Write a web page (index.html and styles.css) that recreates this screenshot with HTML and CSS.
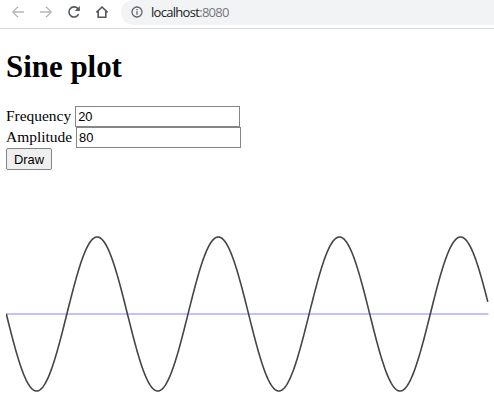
FILE: index.html
```html
<!DOCTYPE html>
<html lang="en">
<head>
<meta charset="utf-8">
<title>Sine plot</title>
<link rel="stylesheet" href="styles.css">
</head>
<body>
<header class="toolbar">
  <svg class="nav muted" viewBox="0 0 16 16"><path d="M14 8H3M8 2.8 2.8 8 8 13.2"/></svg>
  <svg class="nav muted" viewBox="0 0 16 16"><path d="M2 8h11M8 2.8 13.2 8 8 13.2"/></svg>
  <svg class="nav" viewBox="0 0 16 16"><path d="M12.6 10.2A5.1 5.1 0 1 1 11.7 4.4L13 5.8"/><path class="solid" d="M13.8 2v5H8.8z"/></svg>
  <svg class="nav home" viewBox="0 0 16 16"><path d="M2.4 8.3 8 3l5.6 5.3M4.2 7.2v6.1h7.6V7.2"/></svg>
  <div class="address">
    <svg class="info" viewBox="0 0 12 12"><circle cx="6" cy="6" r="5"/><path d="M6 5.2v3.6M6 3v1.3"/></svg>
    <span class="host">localhost<span class="port">:8080</span></span>
  </div>
</header>
<main class="page">
  <h1>Sine plot</h1>
  <form class="controls">
    <label class="row"><span>Frequency</span><input type="text" value="20"></label>
    <label class="row"><span>Amplitude</span><input type="text" value="80"></label>
    <button type="button">Draw</button>
  </form>
  <svg class="plot" viewBox="0 0 483 170">
    <path class="axis" d="M0 85H482.5"/>
    <path class="wave" id="wave"/>
  </svg>
</main>
<script src="plot.js"></script>
</body>
</html>
```
FILE: styles.css
```css
body {
  margin: 0;
  background: #fff;
  color: #000;
  font-family: "Liberation Serif", serif;
  overflow: hidden;
}
.toolbar {
  display: flex;
  height: 28px;
  box-sizing: content-box;
  border-bottom: 1px solid #d9dadc;
  padding-left: 10px;
}
.nav {
  width: 16px;
  height: 16px;
  margin: 4px 12px 0 0;
  flex: none;
  fill: none;
  stroke: #54585d;
  stroke-width: 1.6;
}
.muted { stroke: #b5b6b8; stroke-width: 1.3; }
.home { margin-right: 11px; }
.solid { fill: #54585d; stroke: none; }
.address {
  display: flex;
  flex: 1;
  height: 25px;
  box-sizing: border-box;
  padding-left: 10px;
  background: #f1f3f4;
  border-radius: 12px 0 0 13px;
}
.info {
  width: 12px;
  height: 12px;
  margin: 6px 8px 0 0;
  fill: none;
  stroke: #5f6368;
  stroke-width: 1.3;
}
.host {
  font: 13px/25px "Open Sans", "Noto Sans", sans-serif;
  letter-spacing: -0.7px;
  color: #202124;
}
.port { color: #75797e; }
.page { padding: 0 6px; }
h1 {
  margin: 20px 0 21px;
  font-size: 30.9px;
  line-height: 36px;
}
.controls { margin: 0; }
.row {
  display: flex;
  height: 21px;
  gap: 4px;
  font-size: 15.45px;
  line-height: 19px;
}
input {
  width: 165px;
  height: 21px;
  box-sizing: border-box;
  border: 1px solid #858585;
  padding: 1px 2px;
  font: 12.9px "Liberation Sans", sans-serif;
}
button {
  display: block;
  width: 46px;
  height: 22px;
  box-sizing: border-box;
  padding: 0;
  border: 1px solid #858585;
  border-radius: 2px;
  background: #efefef;
  color: #000;
  font: 12.9px "Liberation Sans", sans-serif;
}
.plot {
  display: block;
  width: 483px;
  height: 170px;
  margin-top: 59px;
  fill: none;
}
.axis { stroke: #c2c2ff; stroke-width: 2; }
.wave { stroke: #444; stroke-width: 1.6; }
```
FILE: plot.js
```js
const amplitude = 77;
const frequency = 19.28;
const points = [];
for (let x = 0; x <= 481.5; x += 0.5) {
  points.push(`${x + 0.3} ${(85 + amplitude * Math.sin(x / frequency)).toFixed(2)}`);
}
document.getElementById("wave").setAttribute("d", "M" + points.join("L"));
```
